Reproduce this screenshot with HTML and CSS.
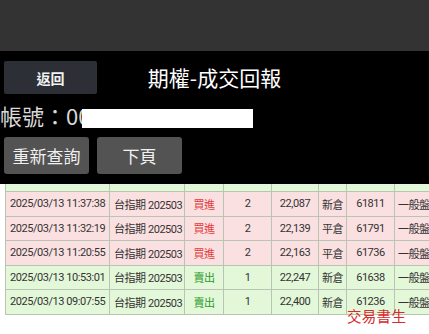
FILE: index.html
```html
<!DOCTYPE html>
<html>
<head>
  <meta charset="utf-8">
  <title>期權-成交回報</title>
  <link rel="stylesheet" href="styles.css">
</head>
<body>
  <div class="statusbar"></div>

  <div class="top">
    <div class="titlebar">
      <button class="back-btn">返回</button>
      <div class="title">期權-成交回報</div>
    </div>

    <div class="account">
      <span>帳號：00</span>
      <div class="mask"></div>
    </div>

    <div class="actions">
      <button class="action-btn">重新查詢</button>
      <button class="action-btn">下頁</button>
    </div>
  </div>

  <div class="list">
    <table class="deals">
      <colgroup>
        <col style="width:104px">
        <col style="width:75px">
        <col style="width:39px">
        <col style="width:48px">
        <col style="width:47px">
        <col style="width:28px">
        <col style="width:48px">
        <col style="width:45px">
      </colgroup>
      <tr class="sell cut">
        <td></td><td></td><td></td><td></td><td></td><td></td><td></td><td></td>
      </tr>
      <tr class="buy">
        <td class="left">2025/03/13 11:37:38</td>
        <td class="left">台指期 202503</td>
        <td class="side">買進</td>
        <td>2</td>
        <td>22,087</td>
        <td>新倉</td>
        <td>61811</td>
        <td class="last">一般盤</td>
      </tr>
      <tr class="buy">
        <td class="left">2025/03/13 11:32:19</td>
        <td class="left">台指期 202503</td>
        <td class="side">買進</td>
        <td>2</td>
        <td>22,139</td>
        <td>平倉</td>
        <td>61791</td>
        <td class="last">一般盤</td>
      </tr>
      <tr class="buy">
        <td class="left">2025/03/13 11:20:55</td>
        <td class="left">台指期 202503</td>
        <td class="side">買進</td>
        <td>2</td>
        <td>22,163</td>
        <td>平倉</td>
        <td>61736</td>
        <td class="last">一般盤</td>
      </tr>
      <tr class="sell">
        <td class="left">2025/03/13 10:53:01</td>
        <td class="left">台指期 202503</td>
        <td class="side">賣出</td>
        <td>1</td>
        <td>22,247</td>
        <td>新倉</td>
        <td>61638</td>
        <td class="last">一般盤</td>
      </tr>
      <tr class="sell">
        <td class="left">2025/03/13 09:07:55</td>
        <td class="left">台指期 202503</td>
        <td class="side">賣出</td>
        <td>1</td>
        <td>22,400</td>
        <td>新倉</td>
        <td>61236</td>
        <td class="last">一般盤</td>
      </tr>
    </table>
    <div class="watermark">交易書生</div>
  </div>
</body>
</html>
```

FILE: styles.css
```css
body {
  margin: 0;
  width: 429px;
  height: 334px;
  overflow: hidden;
  background: #fff;
  font-family: Roboto, "Noto Sans CJK TC", sans-serif;
  color: #333;
}

.statusbar {
  height: 51px;
  background: #333;
}

.top {
  background: #000;
  height: 133px;
}

.titlebar {
  display: grid;
  grid-template-columns: 1fr auto 1fr;
  align-items: center;
  padding: 10px 0 0 4px;
}

.back-btn {
  justify-self: start;
  width: 93px;
  height: 33px;
  border: none;
  border-radius: 2px;
  background: #2c3036;
  color: #f2f2f2;
  font-family: "Noto Sans CJK TC", sans-serif;
  font-size: 14px;
  font-weight: bold;
  padding: 0;
}

.title {
  color: #fff;
  font-family: "Noto Sans CJK TC", sans-serif;
  font-size: 21px;
  line-height: 33px;
  margin-left: -4px;
}

.account {
  position: relative;
  height: 40px;
  padding-top: 2px;
  box-sizing: border-box;
  color: #d8d8d8;
  font-family: "Noto Sans CJK TC", sans-serif;
  font-size: 22px;
  line-height: 38px;
}

.mask {
  position: absolute;
  left: 82px;
  top: 15px;
  width: 171px;
  height: 19px;
  background: #fff;
}

.actions {
  display: flex;
  gap: 8px;
  padding: 3px 0 0 4px;
}

.action-btn {
  width: 85px;
  height: 37px;
  border: none;
  border-radius: 3px;
  background: #535353;
  color: #f0f0f0;
  font-family: "Noto Sans CJK TC", sans-serif;
  font-size: 17px;
  padding: 0;
}

.list {
  position: relative;
  padding-left: 5px;
}

.deals {
  table-layout: fixed;
  width: 434px;
  border-collapse: collapse;
  font-size: 11px;
  letter-spacing: -0.45px;
  white-space: nowrap;
}

.deals td {
  height: 23.5px;
  padding: 0;
  border: 1px solid #b9c4b3;
  text-align: center;
  overflow: hidden;
}

.deals td.left {
  text-align: left;
  padding-left: 4px;
}

.deals td.last {
  text-align: left;
  padding-left: 3px;
  border-right: none;
}

.deals tr.cut td {
  height: 7px;
  border-top: none;
}

.buy td {
  background: #fbe0e1;
}

.sell td {
  background: #e3f7d9;
}

.buy .side {
  color: #e23a3a;
}

.sell .side {
  color: #2c9c2c;
}

.watermark {
  position: absolute;
  left: 347px;
  top: 124px;
  color: #d82a2c;
  font-family: "Noto Sans CJK TC", sans-serif;
  font-size: 14.5px;
  letter-spacing: 0.3px;
  line-height: 15px;
}
```
